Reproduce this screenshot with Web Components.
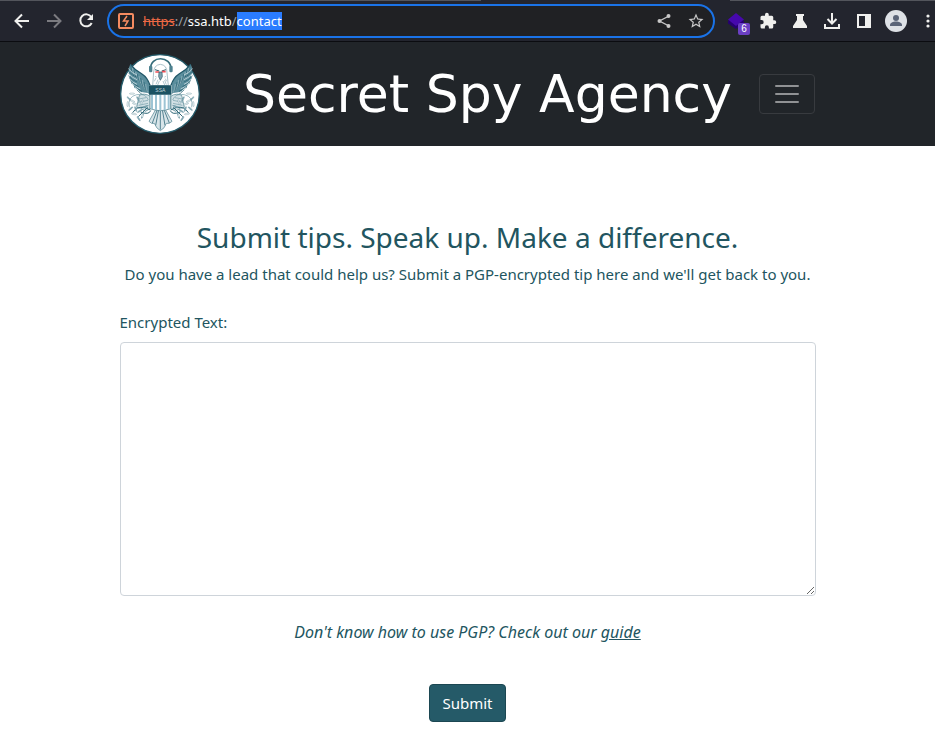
<!DOCTYPE html>
<html lang="en">
<head>
  <meta charset="utf-8">
  <meta name="viewport" content="width=device-width, initial-scale=1">
  <title>Secret Spy Agency | Contact</title>
  <style>
    body {
      margin: 0;
      background: #fff;
      color: #225560;
      font-family: "Noto Sans", sans-serif;
      font-size: 15px;
      line-height: 24px;
    }
  </style>
</head>
<body>
  <browser-toolbar></browser-toolbar>
  <site-header name="Secret Spy Agency"></site-header>
  <tip-form>
    <span slot="title">Submit tips. Speak up. Make a difference.</span>
    <span slot="lead">Do you have a lead that could help us? Submit a PGP-encrypted tip here and we'll get back to you.</span>
  </tip-form>

  <script>
    class ToolButton extends HTMLElement {
      constructor() {
        super();
        this.attachShadow({ mode: 'open' });
      }

      connectedCallback() {
        this.shadowRoot.innerHTML = `
          <style>
            :host {
              display: block;
              flex: none;
              width: 32px;
              height: 32px;
              color: #f0f0ee;
            }
            :host([muted]) { color: #7b7b80; }
            button {
              display: grid;
              place-items: center;
              width: 100%;
              height: 100%;
              padding: 0;
              border: 0;
              background: none;
              color: inherit;
            }
          </style>
          <button type="button" aria-label="${this.getAttribute('label')}"><slot></slot></button>
        `;
      }
    }
    customElements.define('tool-button', ToolButton);

    class AddressBar extends HTMLElement {
      constructor() {
        super();
        this.attachShadow({ mode: 'open' });
      }

      connectedCallback() {
        this.shadowRoot.innerHTML = `
          <style>
            :host {
              display: flex;
              align-items: center;
              flex: 1;
              min-width: 0;
              box-sizing: border-box;
              height: 34px;
              padding: 0 1px 0 8px;
              border: 2px solid #1a73e8;
              border-radius: 17px;
              background: #202124;
              color: #fff;
              font-size: 13px;
              line-height: 18px;
            }
            .url {
              flex: 1;
              margin-left: 8px;
              outline: none;
              white-space: nowrap;
              overflow: hidden;
            }
            .scheme {
              color: #ee6a45;
              text-decoration: line-through;
            }
            .sep { color: #9aa0a6; }
            .selected { background: #2a7cff; }
            tool-button { color: #c8c8c8; }
            svg { display: block; }
          </style>
          <svg width="18" height="18" viewBox="0 0 18 18" fill="none" stroke="#f58b60" stroke-width="2" aria-hidden="true">
            <rect x="2" y="2" width="14" height="14" rx="1"/>
            <path d="M10 4 6.500 9H11L8 14" stroke-width="1.500"/>
          </svg>
          <div class="url" role="textbox" aria-label="Address" contenteditable="true" spellcheck="false"><span class="scheme">https</span><span class="sep">://</span>ssa.htb<span class="sep">/</span><span class="selected">contact</span></div>
          <tool-button label="Share">
            <svg width="16" height="16" viewBox="0 0 16 16" fill="currentColor">
              <path d="M13 3 3.500 8 13 13" fill="none" stroke="currentColor" stroke-width="1.400"/>
              <circle cx="12.500" cy="3" r="2"/><circle cx="3.500" cy="8" r="2"/><circle cx="12.500" cy="13" r="2"/>
            </svg>
          </tool-button>
          <tool-button label="Bookmark this tab">
            <svg width="18" height="18" viewBox="0 0 24 24" fill="currentColor">
              <path d="m22 9.240-7.190-.620L12 2 9.190 8.630 2 9.240l5.460 4.730L5.820 21 12 17.270 18.180 21l-1.630-7.030L22 9.240zM12 15.400l-3.760 2.270 1-4.280-3.320-2.880 4.380-.380L12 6.100l1.710 4.040 4.380.380-3.320 2.880 1 4.280L12 15.400z"/>
            </svg>
          </tool-button>
        `;
      }
    }
    customElements.define('address-bar', AddressBar);

    class BrowserToolbar extends HTMLElement {
      constructor() {
        super();
        this.attachShadow({ mode: 'open' });
      }

      connectedCallback() {
        this.shadowRoot.innerHTML = `
          <style>
            :host {
              display: block;
              overflow: hidden;
              background: #23252e;
              border-bottom: 1px solid #0b0c10;
            }
            .tabs {
              display: flex;
              justify-content: space-between;
              height: 1px;
            }
            .tabs i { background: #53555c; }
            .tabs i:first-child { flex: 0 1 481px; }
            .tabs i:last-child { flex: 0 1 205px; }
            .bar {
              display: flex;
              align-items: center;
              height: 40px;
              padding-left: 6px;
            }
            address-bar { margin: 0 5px; }
            .tools {
              display: flex;
              flex: none;
              margin-right: -9px;
            }
            svg { display: block; }
            .ext {
              position: relative;
              width: 20px;
              height: 20px;
            }
            .count {
              position: absolute;
              left: 12px;
              top: 12px;
              width: 12px;
              border-radius: 2px;
              background: #6b3fc4;
              color: #fff;
              font-size: 10px;
              line-height: 12px;
              text-align: center;
            }
          </style>
          <div class="tabs"><i></i><i></i></div>
          <div class="bar">
            <tool-button label="Back">
              <svg width="16" height="16" viewBox="0 0 16 16" fill="none" stroke="currentColor" stroke-width="2"><path d="M15 8H2M8 1.500 1.500 8 8 14.500"/></svg>
            </tool-button>
            <tool-button label="Forward" muted>
              <svg width="16" height="16" viewBox="0 0 16 16" fill="none" stroke="currentColor" stroke-width="2"><path d="M1 8h13M8 1.500 14.500 8 8 14.500"/></svg>
            </tool-button>
            <tool-button label="Reload">
              <svg width="16" height="16" viewBox="0 0 16 16"><path d="M13.300 4A6 6 0 1 0 13.700 10" fill="none" stroke="currentColor" stroke-width="2"/><path d="M15 1v6H9z" fill="currentColor"/></svg>
            </tool-button>
            <address-bar></address-bar>
            <div class="tools">
              <tool-button label="Wappalyzer">
                <div class="ext">
                  <svg width="20" height="20" viewBox="0 0 20 20"><path d="M2 9.500v3L10 18l8-5.500v-3z" fill="#260070"/><path d="m10 2 8 6.500-8 6.500-8-6.500z" fill="#4608ad"/></svg>
                  <span class="count">6</span>
                </div>
              </tool-button>
              <tool-button label="Extensions">
                <svg width="18" height="18" viewBox="0 0 24 24" fill="currentColor"><path d="M20.500 11H19V7a2 2 0 0 0-2-2h-4V3.500a2.500 2.500 0 0 0-5 0V5H4a2 2 0 0 0-2 2v3.800h1.500a2.700 2.700 0 0 1 0 5.400H2V20a2 2 0 0 0 2 2h3.800v-1.500a2.700 2.700 0 0 1 5.400 0V22H17a2 2 0 0 0 2-2v-4h1.500a2.500 2.500 0 0 0 0-5z"/></svg>
              </tool-button>
              <tool-button label="Labs">
                <svg width="16" height="16" viewBox="0 0 16 16" fill="currentColor"><path d="M4 1h8v2h-1v4l4 6v2H1v-2l4-6V3H4z"/></svg>
              </tool-button>
              <tool-button label="Downloads">
                <svg width="18" height="18" viewBox="0 0 18 18" fill="none" stroke="currentColor" stroke-width="2"><path d="M9 1v10M4.500 7 9 11.500 13.500 7M2 12v4h14v-4"/></svg>
              </tool-button>
              <tool-button label="Side panel">
                <svg width="16" height="16" viewBox="0 0 16 16"><path d="M1 1h14v14H1zM3 3v10h6V3z" fill="currentColor" fill-rule="evenodd"/></svg>
              </tool-button>
              <tool-button label="Profile">
                <svg width="22" height="22" viewBox="0 0 22 22"><circle cx="11" cy="11" r="11" fill="#dee1e6"/><circle cx="11" cy="8" r="3" fill="#5b6478"/><path d="M5 16v-1c0-2 3-3.500 6-3.500s6 1.500 6 3.500v1z" fill="#5b6478"/></svg>
              </tool-button>
              <tool-button label="Menu">
                <svg width="16" height="16" viewBox="0 0 16 16" fill="currentColor"><circle cx="8" cy="3" r="1.600"/><circle cx="8" cy="8" r="1.600"/><circle cx="8" cy="13" r="1.600"/></svg>
              </tool-button>
            </div>
          </div>
        `;
      }
    }
    customElements.define('browser-toolbar', BrowserToolbar);

    class AgencySeal extends HTMLElement {
      constructor() {
        super();
        this.attachShadow({ mode: 'open' });
      }

      // one wing, the talon below it and half of the olive branch
      side() {
        let feathers = '';
        for (let i = 0; i < 10; i++) {
          const x = 32 + i * 5;
          const y = 36 + i * 6;
          feathers += `<path d="M${x} ${y}Q${x + 3} ${y + 30} ${64 + i * 3} ${86 + i * 4}" stroke="${i % 2 ? '#9dbbc4' : '#2c6575'}"/>`;
        }
        // jagged outer tips
        for (let i = 0; i < 10; i++) {
          const y = 44 + i * 7;
          const x = 25 + Math.max(0, i - 4) * 5;
          feathers += `<path d="M${x} ${y}q12 14 26 19" stroke="${i % 2 ? '#215a6b' : '#e3edf0'}"/>`;
        }
        let leaves = '';
        const spots = [[36, 119], [27, 134], [23, 150], [32, 164], [42, 180], [56, 194], [68, 184], [59, 171], [45, 150], [54, 135], [66, 144], [76, 158], [37, 141], [47, 165]];
        spots.forEach(([x, y], i) => {
          leaves += `<ellipse cx="${x}" cy="${y}" rx="8" ry="2" transform="rotate(${i * 47} ${x} ${y})" fill="${i % 2 ? '#8aafba' : '#fff'}" stroke="#4f8290" stroke-width="1"/>`;
        });
        return `
          <path d="M31 30 26 44l3 6-4 8 5 7-3 8 7 7-1 8 9 6 1 8 11 3 4 8 30 5V92Q82 70 66 60 46 48 31 30Z" fill="#5b8e9d"/>
          <g fill="none" stroke-width="2">${feathers}</g>
          <path d="M31 31Q45 49 66 60 82 70 90 94" fill="none" stroke="#205768" stroke-width="4"/>
          <path d="M58 124Q74 116 91 127V164L76 172Q61 159 50 160Z" fill="#d3e1e5" stroke="#417887" stroke-width="2"/>
          <path d="M28 160Q22 128 50 122 77 117 85 138M56 135l22-4M54 145l30-6M56 154l28-6M62 161l24-7" fill="none" stroke="#6f9ba8" stroke-width="2"/>
          <path d="M38 176Q50 157 73 160L91 168M55 188 83 160M65 193 71 176M62 174Q86 184 92 170" fill="none" stroke="#2f6878" stroke-width="3"/>
          ${leaves}
        `;
      }

      connectedCallback() {
        const side = this.side();
        this.shadowRoot.innerHTML = `
          <style>
            :host {
              display: block;
              width: 80px;
              height: 80px;
            }
            svg { display: block; width: 100%; height: 100%; }
          </style>
          <svg viewBox="0 0 240 240" role="img" aria-label="Agency seal">
            <circle cx="120" cy="120" r="118" fill="#fff" stroke="#245b6a" stroke-width="4"/>
            <g>${side}</g>
            <g transform="translate(243 0) scale(-1 1)">${side}</g>
            <path d="M108 165 87 202q9 10 16 6 6 16 18 22 13-6 18-22 9 3 17-6l-21-37z" fill="#d8e5e9" stroke="#4a7f8d" stroke-width="2"/>
            <path d="m112 167-15 40m19-40-9 47m14-47v60m6-60 8 47m-3-47 16 40" stroke="#548391" stroke-width="3"/>
            <path d="M101 54Q102 33 121 31 141 33 141 56L145 95H98Z" fill="#fff" stroke="#7fa2ad" stroke-width="2"/>
            <path d="m103 82 5-10m0 19 6-14m-1 16 5-12m16 12-5-12m10 11-5-14m6 4-4-8M106 66l3 4m28-4-3 4" fill="none" stroke="#8bacb6" stroke-width="2"/>
            <path d="M92 45C89 4 154 4 153 46" fill="none" stroke="#356c7a" stroke-width="5"/>
            <rect x="87" y="35" width="10" height="20" rx="4" fill="#4e8290"/>
            <rect x="148" y="35" width="10" height="20" rx="4" fill="#4e8290"/>
            <path d="m105 47 13 4M138 47l-13 4" stroke="#315d6b" stroke-width="3"/>
            <path d="M106 54h11M126 53h11" stroke="#ef4f56" stroke-width="5"/>
            <path d="M117 54h9l1 14-6 11-5-11z" fill="#7da2af" stroke="#31596a" stroke-width="2"/>
            <path d="M90 117h62v47q-17 6-31 6t-31-6z" fill="#fff" stroke="#356c7a" stroke-width="2"/>
            <path d="M96 122v43M108 122v46M121 122v47M134 122v46M146 122v43" stroke="#9dc4d4" stroke-width="6"/>
            <rect x="87" y="94" width="67" height="28" rx="2" fill="#1b5262"/>
            <text x="121" y="113" text-anchor="middle" fill="#c3d6dc" font-family="Liberation Sans, sans-serif" font-size="15">SSA</text>
          </svg>
        `;
      }
    }
    customElements.define('agency-seal', AgencySeal);

    class SiteHeader extends HTMLElement {
      constructor() {
        super();
        this.attachShadow({ mode: 'open' });
      }

      connectedCallback() {
        this.shadowRoot.innerHTML = `
          <style>
            :host {
              display: block;
              padding: 12px;
              background: #212529;
            }
            nav {
              display: flex;
              align-items: center;
              justify-content: space-between;
              max-width: 696px;
              margin: 0 auto;
            }
            a {
              color: #fff;
              text-decoration: none;
            }
            .name {
              margin-left: 16px;
              font-family: "DejaVu Sans", sans-serif;
              font-size: 52px;
              line-height: 64px;
            }
            button {
              box-sizing: border-box;
              width: 56px;
              height: 40px;
              padding: 4px 12px;
              border: 1px solid #383b3f;
              border-radius: 4px;
              background: none;
            }
            svg { display: block; }
          </style>
          <nav>
            <a href="#home" aria-label="Home"><agency-seal></agency-seal></a>
            <a class="name" href="#home">${this.getAttribute('name')}</a>
            <button type="button" aria-label="Toggle navigation">
              <svg width="30" height="30" viewBox="0 0 30 30" fill="none" stroke="#909294" stroke-width="2" stroke-linecap="round"><path d="M4 7h22M4 15h22M4 23h22"/></svg>
            </button>
          </nav>
        `;
      }
    }
    customElements.define('site-header', SiteHeader);

    class TipForm extends HTMLElement {
      constructor() {
        super();
        this.attachShadow({ mode: 'open' });
      }

      connectedCallback() {
        this.shadowRoot.innerHTML = `
          <style>
            :host {
              display: block;
              max-width: 696px;
              margin: 0 auto;
              padding: 72px 12px 0;
            }
            h2, p {
              margin: 0;
              text-align: center;
            }
            h2 {
              margin-bottom: 6px;
              font-size: 28px;
              font-weight: 400;
              line-height: 38px;
            }
            form {
              display: flex;
              flex-direction: column;
              margin-top: 24px;
            }
            label { margin-bottom: 8px; }
            textarea {
              display: block;
              box-sizing: border-box;
              width: 100%;
              height: 254px;
              padding: 6px 12px;
              border: 1px solid #ced4da;
              border-radius: 4px;
              background: #fff;
              color: #212529;
              font: inherit;
              resize: vertical;
            }
            .hint {
              margin: 24px 0 40px;
              font-size: 16px;
              font-style: italic;
            }
            a { color: inherit; }
            button {
              align-self: center;
              padding: 6px 12px;
              border: 1px solid #1c4752;
              border-radius: 4px;
              background: #255a68;
              color: #fff;
              font: inherit;
            }
          </style>
          <h2><slot name="title"></slot></h2>
          <p><slot name="lead"></slot></p>
          <form>
            <label for="tip">Encrypted Text:</label>
            <textarea id="tip" name="encrypted_text"></textarea>
            <p class="hint">Don't know how to use PGP? Check out our <a href="#guide">guide</a></p>
            <button type="submit">Submit</button>
          </form>
        `;
      }
    }
    customElements.define('tip-form', TipForm);
  </script>
</body>
</html>
